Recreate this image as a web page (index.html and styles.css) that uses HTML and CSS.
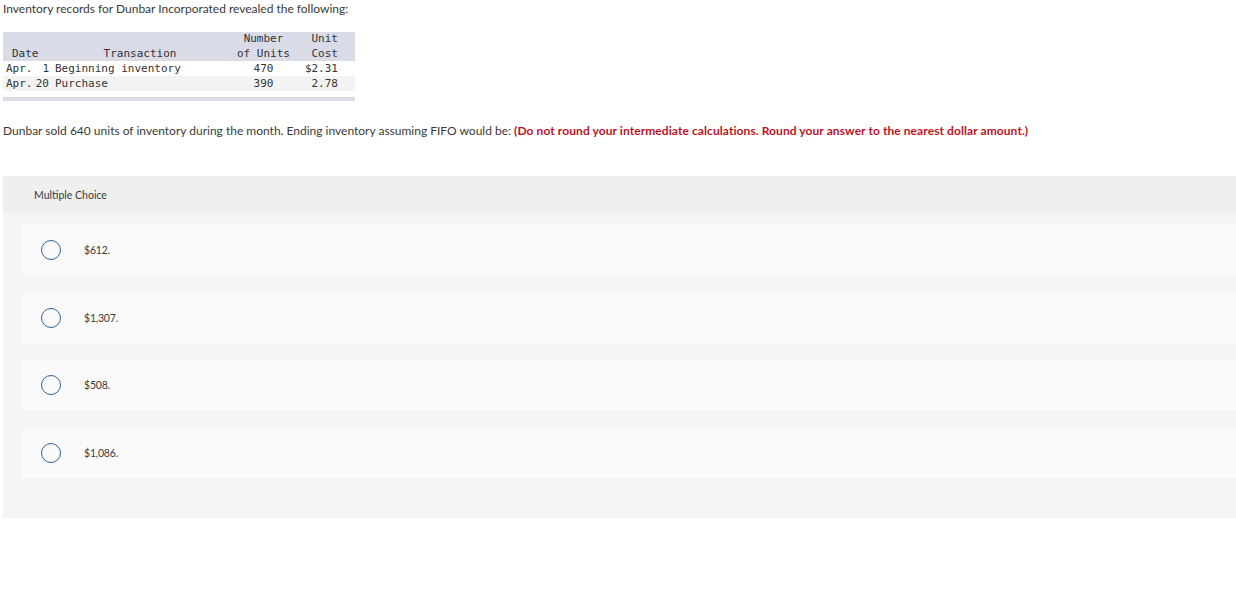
FILE: index.html
```html
<!DOCTYPE html>
<html>
<head>
<meta charset="utf-8">
<link rel="stylesheet" href="styles.css">
</head>
<body>
<div class="page">
  <p class="intro">Inventory records for Dunbar Incorporated revealed the following:</p>
  <div class="inv">
    <div class="row head">
      <div class="c-date">Date</div>
      <div class="c-trans">Transaction</div>
      <div class="c-num">Number<br>of Units</div>
      <div class="c-cost">Unit<br>Cost</div>
    </div>
    <div class="row">
      <div class="c-date"><span>Apr.</span><span>1</span></div>
      <div class="c-trans">Beginning inventory</div>
      <div class="c-num">470</div>
      <div class="c-cost">$2.31</div>
    </div>
    <div class="row alt">
      <div class="c-date"><span>Apr.</span><span>20</span></div>
      <div class="c-trans">Purchase</div>
      <div class="c-num">390</div>
      <div class="c-cost">2.78</div>
    </div>
    <div class="inv-foot"></div>
  </div>
  <p class="question">Dunbar sold 640 units of inventory during the month. Ending inventory assuming FIFO would be: <strong class="note">(Do not round your intermediate calculations. Round your answer to the nearest dollar amount.)</strong></p>
  <section class="mc">
    <div class="mc-head">Multiple Choice</div>
    <div class="mc-body">
      <div class="opt"><span class="radio"></span><span class="opt-text">$612.</span></div>
      <div class="opt"><span class="radio"></span><span class="opt-text">$1,307.</span></div>
      <div class="opt"><span class="radio"></span><span class="opt-text">$508.</span></div>
      <div class="opt"><span class="radio"></span><span class="opt-text">$1,086.</span></div>
    </div>
  </section>
</div>
</body>
</html>
```
FILE: styles.css
```css
html, body {
  margin: 0;
  padding: 0;
  background: #fff;
}
.page {
  padding-left: 3px;
  font-family: Lato, "Open Sans", sans-serif;
  color: #3a3a3a;
  font-size: 12px;
}
.intro {
  margin: 1px 0 0;
  line-height: 15px;
  letter-spacing: -0.01px;
}
.inv {
  margin-top: 16px;
  width: 352px;
  font-family: "DejaVu Sans Mono", "Liberation Mono", monospace;
  font-size: 11px;
  color: #333;
}
.row {
  display: grid;
  grid-template-columns: 49px 176px 71px 56px;
  line-height: 15px;
  white-space: nowrap;
}
.row.head {
  background: #d9dce6;
  line-height: 14.5px;
  align-items: end;
}
.row.alt {
  background: #f3f3f3;
}
.c-date {
  padding: 0 3px;
  display: flex;
  justify-content: space-between;
}
.head .c-date {
  padding-left: 9px;
}
.c-trans {
  padding: 0 3px;
}
.head .c-trans {
  text-align: center;
}
.c-num {
  text-align: center;
}
.c-cost {
  text-align: right;
  padding-right: 17px;
}
.inv-foot {
  height: 4px;
  margin-top: 6px;
  background: #d9dce6;
}
.question {
  margin: 22px 0 0;
  line-height: 15px;
}
.note {
  color: #c0111f;
  font-weight: bold;
  letter-spacing: 0.08px;
}
.mc {
  margin-top: 38px;
  background: #f5f5f5;
}
.mc-head {
  height: 37px;
  background: #efefef;
  display: flex;
  align-items: center;
  padding-left: 31px;
  font-size: 10.5px;
}
.mc-body {
  padding: 12px 0 40px 19px;
  display: flex;
  flex-direction: column;
  gap: 17.5px;
}
.opt {
  height: 50px;
  background: #fafafa;
  border-radius: 3px 0 0 3px;
  display: flex;
  align-items: center;
  padding-left: 19px;
}
.radio {
  width: 18px;
  height: 18px;
  border: 1.5px solid #2e6399;
  border-radius: 50%;
  flex: none;
}
.opt-text {
  margin-left: 23px;
  font-size: 10.5px;
  letter-spacing: -0.2px;
}
```
